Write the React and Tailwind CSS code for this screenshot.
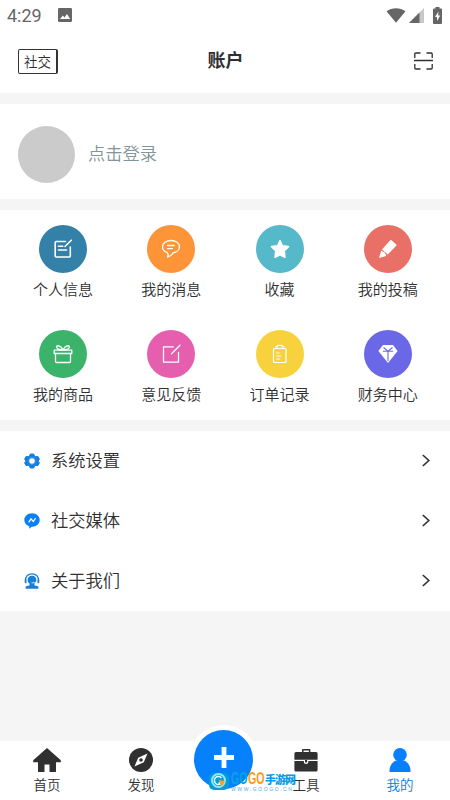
import React from "react";

const strokeProps = {
  fill: "none",
  stroke: "currentColor",
  strokeWidth: 1.4,
  strokeLinecap: "round",
  strokeLinejoin: "round",
};

const ProfileIcon = () => (
  <svg viewBox="0 0 20 20" className="w-5 h-5" {...strokeProps} strokeWidth={1.6}>
    <path d="M12.500 2.500H3.200a1 1 0 0 0-1 1V17a1 1 0 0 0 1 1H16.300a1 1 0 0 0 1-1V8" />
    <path d="M18.300 1.200 12 7.500M5.500 7.200h4.300M5.500 11h8" />
  </svg>
);

const MessageIcon = () => (
  <svg viewBox="0 0 20 20" className="w-5 h-5" {...strokeProps} strokeWidth={1.3}>
    <path d="M6.200 13.600C3.300 12.600 1.500 10.400 1.500 7.800c0-3.600 3.800-6.300 8.500-6.300s8.500 2.700 8.500 6.300c0 3-2.800 5.600-6.500 6.200-.9 1.800-3 3.400-5.500 4 .8-1.400.9-3 -.3-4.400Z" />
    <path d="M6.500 6.500h6.800M6.500 9.600h5" />
  </svg>
);

const StarIcon = () => (
  <svg viewBox="0 0 20 20" className="w-5 h-5" fill="currentColor" stroke="currentColor" strokeWidth="1.500" strokeLinejoin="round">
    <path d="m10 1.500 2.400 5.300 6.100.8-4.300 4.300.8 6.300-5-2.300-5 2.300.8-6.300L1.500 7.600l6.100-.8Z" />
  </svg>
);

const PenIcon = () => (
  <svg viewBox="0 0 20 20" className="w-5 h-5" fill="currentColor">
    <path d="M12.200 1.300a1 1 0 0 1 1.300-.1l4.600 4.100c.4.400.4 1 .1 1.400L9.800 15.600 4 10.400Z" />
    <path d="m3.300 11.400 1.800 1.500 1.200-.1.600 1.800 1.500 1.500-1.100 1.100L1 19Z" />
  </svg>
);

const GiftIcon = () => (
  <svg viewBox="0 0 20 20" className="w-5 h-5" {...strokeProps} strokeWidth={1.3}>
    <path d="M1.200 6.200h17.600v3.300H1.200zM2.500 9.500h15v8a1 1 0 0 1-1 1h-13a1 1 0 0 1-1-1Z" />
    <path d="M10 6C8 2 4.500 .8 3.700 2.500 3.100 4.300 5.500 6 10 6c4.500 0 6.900-1.700 6.300-3.500C15.500 .8 12 2 10 6Z" />
  </svg>
);

const FeedbackIcon = () => (
  <svg viewBox="0 0 20 20" className="w-5 h-5" {...strokeProps} strokeWidth={1.3}>
    <path d="M12.300 2.800H2.500v15.400h15V8.500M19 1.300l-8.500 8.500" />
  </svg>
);

const OrderIcon = () => (
  <svg viewBox="0 0 20 20" className="w-5 h-5" {...strokeProps} strokeWidth={1.2}>
    <rect x="3.500" y="4.500" width="12.500" height="14" rx="1" />
    <path d="M5.500 2.800h2V1.300h4.600v1.500h2M6.700 9h2.500M6.700 12h4M6.700 15h3" />
  </svg>
);

const DiamondIcon = () => (
  <svg viewBox="0 0 20 20" className="w-5 h-5">
    <path fill="currentColor" d="M5 1h10l4.600 6L10 19 .4 7Z" />
    <path d="m5.500 3.500 4.500 3.700 4.500-3.700M5 7.200h10M10 7.200V17" fill="none" stroke="#6a68e6" strokeWidth="1.100" />
  </svg>
);

const GearIcon = () => (
  <svg viewBox="0 0 16 16" className="w-4 h-4">
    <path
      fill="#1680e0"
      fillRule="evenodd"
      stroke="#1680e0"
      strokeWidth="1"
      strokeLinejoin="round"
      d="M6.300 1h3.400l.8 2 1.300.7 2.100-.3 1.500 2.700L14 8l1.400 1.900-1.500 2.700-2.100-.3-1.300.7-.8 2H6.300l-.8-2-1.300-.7-2.100.3L.6 9.900 2 8 .6 6.100l1.500-2.700 2.100.3L5.500 3ZM8 4.600a3.400 3.400 0 1 0 0 6.800 3.400 3.400 0 0 0 0-6.800Z"
    />
  </svg>
);

const SocialIcon = () => (
  <svg viewBox="0 0 16 16" className="w-4 h-4">
    <path fill="#0b80f5" d="M8 .3c4.300 0 7.700 2.900 7.700 6.700S12.300 13.700 8.500 13.700c-.8 0-1.200.2-3.300 2.100v-2.500C2.200 12.300.3 10 .3 7 .3 3.200 3.700.3 8 .3Z" />
    <path d="m4.700 9.300 2.300-3.500 2.300 2.800L11.500 5.200" fill="none" stroke="#fff" strokeWidth="1.200" />
  </svg>
);

const SupportIcon = () => (
  <svg viewBox="0 0 16 16" className="w-4 h-4">
    <path d="M1.500 8C1 3.500 4 .8 8 .8s7 2.700 6.500 7.200" fill="none" stroke="#1680d8" strokeWidth="1.200" />
    <path fill="#1680d8" d="M.7 6.500h1.800v3.700H1.700A1 1 0 0 1 .7 9.200Zm12.800 0h1.800v2.700a1 1 0 0 1-1 1h-.8ZM8 2.800c2.700 0 4.400 1.700 4.400 4.200 0 1.700-.8 3-2 3.800v1.400l4 1.300v2.300H1.600v-2.300l4-1.300v-1.400c-1.200-.8-2-2.100-2-3.800 0-2.500 1.700-4.200 4.400-4.200Z" />
    <path d="M7.500 9.800c2 .3 4-.3 5.500-1.300" fill="none" stroke="#fff" strokeWidth=".8" />
  </svg>
);

const HomeIcon = () => (
  <svg viewBox="0 0 28 24" className="w-7 h-6" fill="#303030">
    <path d="M14 0 27.800 12.300v1.900H23V24h-6.500v-7.500h-5V24H5v-9.800H.2v-1.900Z" />
  </svg>
);

const CompassIcon = () => (
  <svg viewBox="0 0 24 24" className="w-6 h-6">
    <circle cx="12" cy="12" r="12" fill="#303030" />
    <path fill="#fff" fillRule="evenodd" d="m18.500 5.500-3.700 8.800-9.300 4.200 3.700-8.800ZM12 10.200a1.800 1.800 0 1 0 0 3.600 1.800 1.800 0 0 0 0-3.600Z" />
  </svg>
);

const ToolsIcon = () => (
  <svg viewBox="0 0 24 23" className="w-6 h-[23px]" fill="#303030">
    <path fillRule="evenodd" d="M8 3V1.200C8 .5 8.500 0 9.200 0h6c.7 0 1.200.5 1.200 1.200V3H22a1.600 1.600 0 0 1 1.600 1.600v6.200H.4V4.600A1.600 1.600 0 0 1 2 3Zm1.500 0h5.400V1.500H9.500Z" />
    <path d="M.4 12H9.800v.7a2.300 2.300 0 0 0 4.600 0V12h9.200v9a1.500 1.500 0 0 1-1.500 1.500H1.900A1.500 1.500 0 0 1 .4 21Z" />
    <path d="M11 11h2.200v1.600a1.100 1.100 0 0 1-2.200 0Z" />
  </svg>
);

const UserIcon = () => (
  <svg viewBox="0 0 22 24" className="w-[22px] h-6" fill="#0880fc">
    <circle cx="11" cy="6.800" r="6.800" />
    <path d="M7 12.500h8c4 1.500 6.500 5.500 6.500 10V24H.5v-1.500c0-4.500 2.500-8.500 6.500-10Z" />
  </svg>
);

const shortcuts = [
  { label: "个人信息", color: "bg-[#3381a8]", Icon: ProfileIcon },
  { label: "我的消息", color: "bg-[#fd9437]", Icon: MessageIcon },
  { label: "收藏", color: "bg-[#56b9c9]", Icon: StarIcon },
  { label: "我的投稿", color: "bg-[#e87067]", Icon: PenIcon },
  { label: "我的商品", color: "bg-[#3cb36b]", Icon: GiftIcon },
  { label: "意见反馈", color: "bg-[#e65fae]", Icon: FeedbackIcon },
  { label: "订单记录", color: "bg-[#f8d23c]", Icon: OrderIcon },
  { label: "财务中心", color: "bg-[#6a68e6]", Icon: DiamondIcon },
];

const menuItems = [
  { label: "系统设置", Icon: GearIcon },
  { label: "社交媒体", Icon: SocialIcon },
  { label: "关于我们", Icon: SupportIcon },
];

const StatusBar = () => (
  <div className="flex items-center h-[30px] pl-[7px] pr-2 text-[#666]">
    <span className="font-[Roboto] font-normal text-[18px] leading-[30px] pt-0.5">4:29</span>
    <svg viewBox="0 0 14 14" className="w-3.5 h-3.5 ml-4">
      <rect width="14" height="14" rx="1.300" fill="#666" />
      <path d="m2 11 2.800-3.500L6.500 9.500 9 6l3.200 5Z" fill="#fff" />
    </svg>
    <svg viewBox="0 0 20 15" className="w-5 h-[15px] ml-auto">
      <path d="M.5 3.200C6-.8 14-.8 19.500 3.200L10 14.800Z" fill="#666" />
    </svg>
    <svg viewBox="0 0 15 15" className="w-[15px] h-[15px] ml-[3px]">
      <path d="M15 0v15H0Z" fill="#c8c8c8" />
      <path d="M10.500 4.500V15H0Z" fill="#666" />
    </svg>
    <svg viewBox="0 0 9 17" className="w-[9px] h-[17px] ml-[9px]">
      <path d="M2.500 0h4v1.500H8a1 1 0 0 1 1 1V16a1 1 0 0 1-1 1H1a1 1 0 0 1-1-1V2.500a1 1 0 0 1 1-1h1.500Z" fill="#666" />
      <path d="M5.500 4.500 2 10h2v4l3.200-5.500h-2Z" fill="#fff" />
    </svg>
  </div>
);

const Header = () => (
  <div className="grid grid-cols-3 items-center h-[63px] pl-[18px] pr-[17px]">
    <div className="w-10 h-[25px] border border-r-2 border-[#333] rounded-[2px] text-[13.500px] leading-[23px] text-center">
      社交
    </div>
    <h1 className="text-center text-[18px] leading-6 font-bold -mt-1.5">账户</h1>
    <svg viewBox="0 0 19 18" className="w-[19px] h-[18px] -mt-0.5 justify-self-end" {...strokeProps} strokeLinecap="butt" strokeWidth={1.300}>
      <path d="M.8 6V2a1 1 0 0 1 1-1H6.500M12.500 1h4.700a1 1 0 0 1 1 1v4M.8 12v4a1 1 0 0 0 1 1H6.500M12.500 17h4.700a1 1 0 0 0 1-1v-4M0 8.500h19" />
    </svg>
  </div>
);

const NavItem = ({ label, Icon, active }) => (
  <div
    className={`flex flex-col items-center w-[94px] pt-[7px] text-[13.500px] leading-5 ${
      active ? "text-[#087be0]" : "text-[#303030]"
    }`}
  >
    <span className="flex items-center h-6">
      <Icon />
    </span>
    <span className="mt-0.5">{label}</span>
  </div>
);

const Watermark = () => (
  <div className="absolute left-[208px] top-[28px] flex items-center h-[23px]">
    <svg viewBox="0 0 22 22" className="w-[22px] h-[22px]">
      <rect x="1" y="3" width="20" height="17" rx="5" fill="#079bd9" />
      <circle cx="10.500" cy="10.500" r="6.500" fill="none" stroke="#8eeaff" strokeWidth="2" />
      <path d="M13.500 8a4 4 0 1 0 0 5h-3" fill="none" stroke="#e5fbff" strokeWidth="1.500" />
      <path d="m11 10 6 1-2 4-3-1Z" fill="#ffa126" />
    </svg>
    <div className="w-[68px] ml-px pt-0.5 whitespace-nowrap">
      <div className="flex items-center h-[14px] font-black leading-[14px] text-[#079be8]">
        <span className="w-[17px] text-[16px] font-['Liberation_Sans'] [transform:scaleX(.67)] origin-left text-[#08a5df]">GO</span>
        <span className="w-[17px] text-[16px] font-['Liberation_Sans'] [transform:scaleX(.67)] origin-left text-[#ff9b16]">GO</span>
        <span className="text-[11px] tracking-[-1px]">手游网</span>
      </div>
      <div className="h-[6px] text-[5px] leading-[6px] tracking-[1.600px] font-['Liberation_Sans'] font-normal text-[#4fa9e6]">WWW.GOOGO.CN</div>
    </div>
  </div>
);

const BottomNav = () => (
  <div className="relative flex h-[59px] bg-white">
    <NavItem label="首页" Icon={HomeIcon} />
    <NavItem label="发现" Icon={CompassIcon} />
    <div className="flex justify-center w-[71px] -mt-4">
      <div className="flex shrink-0 items-center justify-center w-[69px] h-[69px] rounded-full bg-white">
        <div className="flex items-center justify-center w-[59px] h-[59px] rounded-full bg-[#0780fc]">
          <svg viewBox="0 0 20 21" className="w-5 h-[21px] mb-1">
            <path d="M10 0v21M0 10.500h20" stroke="#fff" strokeWidth="4.800" />
          </svg>
        </div>
      </div>
    </div>
    <NavItem label="工具" Icon={ToolsIcon} />
    <NavItem label="我的" Icon={UserIcon} active />
    <Watermark />
  </div>
);

const App = () => {
  return (
    <div className="flex flex-col w-[450px] h-[800px] overflow-hidden bg-[#f5f5f5] text-[#303030] font-['Noto_Sans_CJK_SC',sans-serif] font-[350]">
      <div className="bg-white">
        <StatusBar />
        <Header />
      </div>

      {/* Login */}
      <div className="flex items-center h-[95px] mt-[11px] pl-[18px] pt-[5px] bg-white">
        <div className="w-[57px] h-[57px] rounded-full bg-[#cbcbcb]" />
        <span className="ml-[13px] -mt-0.5 text-[17.300px] leading-6 text-[#82959a]">点击登录</span>
      </div>

      {/* Shortcuts */}
      <div className="grid grid-cols-4 auto-rows-[105px] h-[210px] mt-[11px] pl-[9px] pr-2 bg-white">
        {shortcuts.map(({ label, color, Icon }) => (
          <div key={label} className="flex flex-col items-center pt-[15px]">
            <div className={`flex items-center justify-center w-12 h-12 rounded-full text-white ${color}`}>
              <Icon />
            </div>
            <span className="mt-1 text-[15px] leading-6">{label}</span>
          </div>
        ))}
      </div>

      {/* Menu */}
      <div className="mt-[11px] bg-white">
        {menuItems.map(({ label, Icon }) => (
          <div key={label} className="flex items-center h-[60px] pl-6 pr-5">
            <Icon />
            <span className="ml-[11px] -mt-0.5 text-[17.300px] leading-6">{label}</span>
            <svg viewBox="0 0 8 14" className="w-2 h-3.5 ml-auto" {...strokeProps} strokeWidth={1.600} strokeLinecap="butt" strokeLinejoin="miter">
              <path d="m.8 1 6 5.500-6 5.500" />
            </svg>
          </div>
        ))}
      </div>

      <div className="flex-1" />
      <BottomNav />
    </div>
  );
};

export default App;
